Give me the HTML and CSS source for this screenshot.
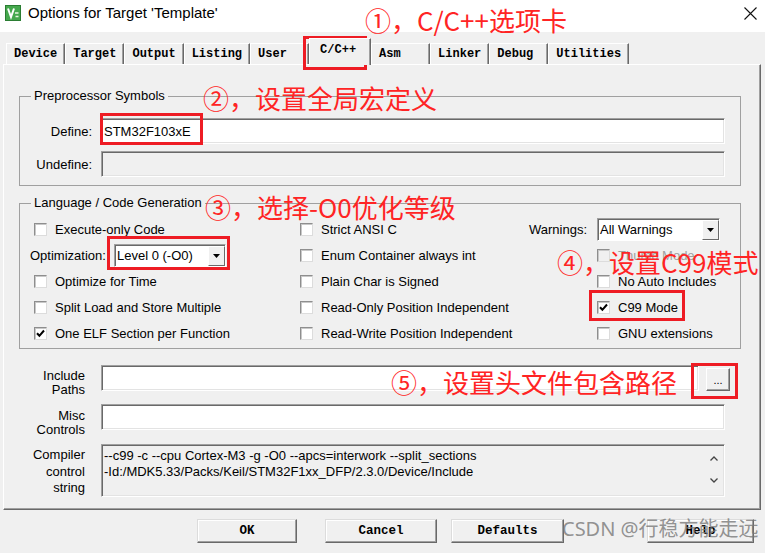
FILE: index.html
```html
<!DOCTYPE html>
<html lang="en">
<head>
  <meta charset="UTF-8">
  <meta name="viewport" content="width=device-width, initial-scale=1.0">
  <title>Options for Target 'Template'</title>
  <link rel="stylesheet" href="styles.css">
</head>
<body>

<div class="window">
  <div class="titlebar">
    <svg class="app-icon" viewBox="0 0 16 16">
      <rect width="16" height="16" fill="#2b7d33"/>
      <rect x="1" y="1" width="14" height="14" fill="#45a84d"/>
      <path d="M3 3.5 L6 12 L9 3.5" stroke="#fff" stroke-width="2" fill="none"/>
      <path d="M10 8 h3.5 M10.5 11.5 h3" stroke="#e8f5e0" stroke-width="1.5"/>
    </svg>
    <span class="title">Options for Target 'Template'</span>
    <svg class="close" viewBox="0 0 13 13">
      <path d="M0.5 0.5 L12.5 12.5 M12.5 0.5 L0.5 12.5" stroke="#111" stroke-width="1.1"/>
    </svg>
  </div>

  <div class="client">
    <div class="tabs">
      <div class="tab">Device</div>
      <div class="tab">Target</div>
      <div class="tab">Output</div>
      <div class="tab">Listing</div>
      <div class="tab">User</div>
      <div class="tab active">C/C++</div>
      <div class="tab">Asm</div>
      <div class="tab">Linker</div>
      <div class="tab">Debug</div>
      <div class="tab">Utilities</div>
    </div>

    <div class="panel">
      <fieldset class="group">
        <legend>Preprocessor Symbols</legend>
        <div class="pre-body">
          <div class="sym-row">
            <label>Define:</label>
            <div class="edit">STM32F103xE</div>
          </div>
          <div class="sym-row">
            <label>Undefine:</label>
            <div class="edit disabled"></div>
          </div>
        </div>
      </fieldset>

      <fieldset class="group lang">
        <legend>Language / Code Generation</legend>
        <div class="lang-cols">
          <div class="col col-left">
            <div class="check"><span class="box"></span>Execute-only Code</div>
            <div class="opt-row">
              <span class="opt-label">Optimization:</span>
              <div class="combo combo-opt"><span>Level 0 (-O0)</span><i class="drop"><svg viewBox="0 0 7 4"><path d="M0 0h7L3.5 4z"/></svg></i></div>
            </div>
            <div class="check"><span class="box"></span>Optimize for Time</div>
            <div class="check"><span class="box"></span>Split Load and Store Multiple</div>
            <div class="check"><span class="box"><svg viewBox="0 0 9 9"><path d="M1 4.2 L3.4 6.8 L8 1.5" stroke="#000" stroke-width="2" fill="none"/></svg></span>One ELF Section per Function</div>
          </div>
          <div class="col col-mid">
            <div class="check"><span class="box"></span>Strict ANSI C</div>
            <div class="check"><span class="box"></span>Enum Container always int</div>
            <div class="check"><span class="box"></span>Plain Char is Signed</div>
            <div class="check"><span class="box"></span>Read-Only Position Independent</div>
            <div class="check"><span class="box"></span>Read-Write Position Independent</div>
          </div>
          <div class="col col-right">
            <div class="opt-row">
              <span class="warn-label">Warnings:</span>
              <div class="combo combo-warn"><span>All Warnings</span><i class="drop"><svg viewBox="0 0 7 4"><path d="M0 0h7L3.5 4z"/></svg></i></div>
            </div>
            <div class="check off"><span class="box"></span>Thumb Mode</div>
            <div class="check"><span class="box"></span>No Auto Includes</div>
            <div class="check"><span class="box"><svg viewBox="0 0 9 9"><path d="M1 4.2 L3.4 6.8 L8 1.5" stroke="#000" stroke-width="2" fill="none"/></svg></span>C99 Mode</div>
            <div class="check"><span class="box"></span>GNU extensions</div>
          </div>
        </div>
      </fieldset>

      <div class="path-row include">
        <div class="path-label">Include<br>Paths</div>
        <div class="edit"></div>
        <button class="dots">...</button>
      </div>
      <div class="path-row misc">
        <div class="path-label">Misc<br>Controls</div>
        <div class="edit"></div>
      </div>
      <div class="path-row compiler">
        <div class="path-label">Compiler<br>control<br>string</div>
        <div class="edit disabled multi">
          <div class="code">--c99 -c --cpu Cortex-M3 -g -O0 --apcs=interwork --split_sections
-Id:/MDK5.33/Packs/Keil/STM32F1xx_DFP/2.3.0/Device/Include</div>
          <div class="scroll">
            <svg viewBox="0 0 8 5"><path d="M0.5 4.5 L4 1 L7.5 4.5" stroke="#444" stroke-width="1.3" fill="none"/></svg>
            <svg viewBox="0 0 8 5"><path d="M0.5 0.5 L4 4 L7.5 0.5" stroke="#444" stroke-width="1.3" fill="none"/></svg>
          </div>
        </div>
      </div>
    </div>

    <div class="buttons">
      <button class="btn ok">OK</button>
      <button class="btn cancel">Cancel</button>
      <button class="btn defaults">Defaults</button>
      <button class="btn help">Help</button>
    </div>
  </div>

  <!-- annotations drawn over the dialog -->
  <div class="mark mark-tab"></div>
  <div class="mark mark-define"></div>
  <div class="mark mark-opt"></div>
  <div class="mark mark-c99"></div>
  <div class="mark mark-dots"></div>

  <div class="note note-1">①，C/C++选项卡</div>
  <div class="note note-2">②，设置全局宏定义</div>
  <div class="note note-3">③，选择-O0优化等级</div>
  <div class="note note-4">④，设置C99模式</div>
  <div class="note note-5">⑤，设置头文件包含路径</div>

  <div class="watermark">CSDN @行稳方能走远</div>
</div>

</body>
</html>
```

FILE: styles.css
```css
* {
  box-sizing: border-box;
}

body {
  margin: 0;
  background: #fff;
  font-family: "Liberation Sans", Arial, sans-serif;
  font-size: 13px;
  color: #000;
}

.window {
  position: relative;
  width: 768px;
  height: 553px;
  overflow: hidden;
}

/* title bar */
.titlebar {
  height: 32px;
  display: flex;
  align-items: flex-start;
  background: #fff;
}

.app-icon {
  width: 16px;
  height: 16px;
  margin: 5px 0 0 5px;
}

.title {
  margin: 4px 0 0 7px;
  font-size: 15px;
  line-height: 18px;
}

.close {
  width: 13px;
  height: 13px;
  margin: 7px 11px 0 auto;
}

.client {
  width: 765px;
  height: 521px;
  background: #f0f0f0;
  padding-top: 6px;
}

/* tabs */
.tabs {
  display: flex;
  align-items: flex-end;
  height: 26px;
  margin-left: 6px;
}

.tab {
  height: 21px;
  min-width: 59px;
  padding: 0 7px;
  font-family: "Liberation Mono", monospace;
  font-weight: bold;
  font-size: 12px;
  line-height: 21px;
  border-top: 1px solid #fff;
  border-left: 1px solid #fff;
  border-right: 1px solid #696969;
  box-shadow: inset -1px 0 #a0a0a0;
}

.tab.active {
  position: relative;
  z-index: 1;
  height: 27px;
  min-width: 62px;
  margin-bottom: -1px;
  padding: 0 10px;
  line-height: 23px;
  background: #f0f0f0;
}

.panel {
  margin-left: 3px;
  width: 758px;
  height: 446px;
  border: 1px solid;
  border-color: #fff #696969 #696969 #fff;
  box-shadow: inset -1px -1px #a0a0a0;
  padding: 23px 19px 0 15px;
}

/* group boxes */
.group {
  margin: 0;
  padding: 0;
  min-width: 0;
  border: 1px solid #a0a0a0;
}

.group legend {
  margin-left: 11px;
  padding: 0 3px;
  line-height: 16px;
}

.pre-body {
  display: flex;
  flex-direction: column;
  gap: 7px;
  padding: 14px 15px 8px 0;
}

.sym-row {
  display: flex;
  align-items: center;
  height: 26px;
}

.sym-row label {
  width: 72px;
  margin-right: 9px;
  text-align: right;
}

.edit {
  flex: 1;
  height: 26px;
  display: flex;
  align-items: center;
  padding-left: 2px;
  background: #fff;
  border: 1px solid;
  border-color: #a0a0a0 #fff #fff #a0a0a0;
  box-shadow: inset 1px 1px #696969, inset -1px -1px #e3e3e3;
}

.edit.disabled {
  background: #f0f0f0;
}

.lang {
  margin-top: 9px;
}

.lang-cols {
  display: flex;
  padding: 5px 0 2px 10px;
}

.col {
  display: flex;
  flex-direction: column;
}

.col > div {
  height: 26px;
}

.col-left {
  width: 270px;
}

.col-mid {
  width: 229px;
}

.col-right {
  flex: 1;
}

.check {
  display: flex;
  align-items: center;
}

.col-left .check {
  padding-left: 4px;
}

.col-right .check {
  padding-left: 68px;
}

.box {
  width: 13px;
  height: 13px;
  margin-right: 8px;
  display: flex;
  align-items: center;
  justify-content: center;
  background: #fff;
  border: 1px solid;
  border-color: #8e8e8e #dcdcdc #dcdcdc #8e8e8e;
  box-shadow: inset 1px 1px #c8c8c8;
}

.box svg {
  width: 9px;
  height: 9px;
}

.check.off {
  color: #a0a0a0;
}

.check.off .box {
  background: #f0f0f0;
}

.opt-row {
  display: flex;
  align-items: center;
}

.opt-label {
  width: 84px;
}

.warn-label {
  width: 68px;
}

.combo {
  display: flex;
  height: 23px;
  background: #fff;
  border: 1px solid;
  border-color: #a0a0a0 #fff #fff #a0a0a0;
  box-shadow: inset 1px 1px #696969;
}

.combo span {
  flex: 1;
  padding: 1px 0 0 2px;
  line-height: 20px;
}

.combo-opt {
  width: 112px;
}

.combo-warn {
  width: 123px;
}

.drop {
  width: 17px;
  margin: 1px 0 0 0;
  display: flex;
  align-items: center;
  justify-content: center;
  background: #f0f0f0;
  border: 1px solid;
  border-color: #fff #696969 #696969 #fff;
}

.drop svg {
  width: 7px;
  height: 4px;
}

/* include / misc / compiler rows */
.path-row {
  display: flex;
  align-items: flex-start;
  padding-right: 16px;
  margin-top: 7px;
}

.path-label {
  width: 66px;
  margin-right: 16px;
  text-align: right;
  line-height: 14px;
}

.include {
  margin-top: 16px;
  padding-right: 11px;
}

.include .path-label {
  margin-top: 4px;
}

.misc .path-label {
  margin-top: 5px;
}

.compiler .path-label {
  margin-top: 3px;
  line-height: 16.5px;
}

.dots {
  width: 24px;
  height: 23px;
  margin: 3px 0 0 7px;
  padding: 0;
  font: 11px "Liberation Sans", sans-serif;
  line-height: 14px;
  background: #f0f0f0;
  border: 1px solid;
  border-color: #fff #696969 #696969 #fff;
  box-shadow: inset -1px -1px #a0a0a0;
}

.edit.multi {
  height: 53px;
  align-items: stretch;
  padding-left: 0;
}

.code {
  flex: 1;
  padding: 3px 0 0 2px;
  line-height: 16px;
  white-space: pre;
  overflow: hidden;
}

.scroll {
  width: 20px;
  display: flex;
  flex-direction: column;
  justify-content: space-between;
  align-items: center;
  padding: 11px 0 13px;
}

.scroll svg {
  width: 8px;
  height: 5px;
}

/* bottom buttons */
.buttons {
  display: flex;
  margin-top: 9px;
}

.btn {
  height: 24px;
  padding: 0;
  font-family: "Liberation Mono", monospace;
  font-weight: bold;
  font-size: 12.5px;
  color: #000;
  background: #f0f0f0;
  border: 1px solid;
  border-color: #dcdcdc #696969 #696969 #dcdcdc;
  box-shadow: inset -1px -1px #a0a0a0, inset 1px 1px #fff;
}

.ok {
  width: 100px;
  margin-left: 197px;
}

.cancel {
  width: 112px;
  margin-left: 28px;
}

.defaults {
  width: 113px;
  margin-left: 14px;
}

.help {
  width: 107px;
  margin-left: 83px;
}

/* red annotations */
.mark {
  position: absolute;
  border: 3px solid #ee1c24;
}

.mark-tab {
  left: 303px;
  top: 36px;
  width: 64px;
  height: 34px;
}

.mark-define {
  left: 100px;
  top: 113px;
  width: 103px;
  height: 32px;
}

.mark-opt {
  left: 107px;
  top: 236px;
  width: 123px;
  height: 34px;
}

.mark-c99 {
  left: 589px;
  top: 290px;
  width: 96px;
  height: 31px;
}

.mark-dots {
  left: 691px;
  top: 363px;
  width: 47px;
  height: 36px;
}

.note {
  position: absolute;
  font-family: "Noto Sans CJK SC", sans-serif;
  font-size: 26px;
  line-height: 26px;
  color: #ff2424;
  white-space: nowrap;
}

.note-1 {
  left: 365px;
  top: 7px;
}

.note-2 {
  left: 203px;
  top: 85px;
}

.note-3 {
  left: 205px;
  top: 194px;
}

.note-4 {
  left: 557px;
  top: 249px;
}

.note-5 {
  left: 391px;
  top: 369px;
}

.watermark {
  position: absolute;
  left: 562px;
  top: 519px;
  font-family: "Noto Sans", "Noto Sans CJK SC", sans-serif;
  font-size: 20px;
  line-height: 20px;
  color: rgba(120, 120, 120, 0.8);
  white-space: nowrap;
}
```
